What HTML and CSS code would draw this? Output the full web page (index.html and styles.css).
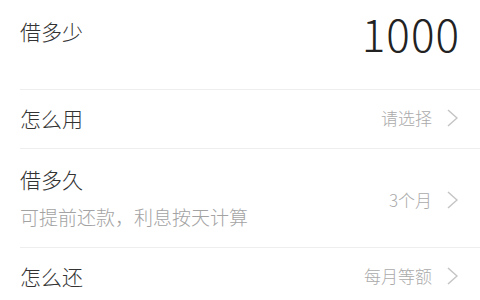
FILE: index.html
```html
<!DOCTYPE html>
<html lang="zh-CN">
<head>
  <meta charset="UTF-8" />
  <meta name="viewport" content="width=device-width, initial-scale=1.0" />
  <title>借款</title>
  <link rel="stylesheet" href="styles.css">
</head>
<body>
  <div class="list">
    <div class="item item-amount">
      <span class="title">借多少</span>
      <span class="amount">1000</span>
    </div>

    <div class="item">
      <span class="title">怎么用</span>
      <span class="value">请选择
        <svg class="arrow" width="11" height="18" viewBox="0 0 11 18"><polyline points="1,1 10,9 1,17" /></svg>
      </span>
    </div>

    <div class="item item-tall">
      <div class="left">
        <div class="title">借多久</div>
        <div class="sub">可提前还款，利息按天计算</div>
      </div>
      <span class="value">3个月
        <svg class="arrow" width="11" height="18" viewBox="0 0 11 18"><polyline points="1,1 10,9 1,17" /></svg>
      </span>
    </div>

    <div class="item">
      <span class="title">怎么还</span>
      <span class="value">每月等额
        <svg class="arrow" width="11" height="18" viewBox="0 0 11 18"><polyline points="1,1 10,9 1,17" /></svg>
      </span>
    </div>
  </div>
</body>
</html>
```

FILE: styles.css
```css
body {
  margin: 0;
  background: #fff;
  font-family: "Noto Sans CJK SC", "Noto Sans", sans-serif;
  font-weight: 300;
  color: #333;
}
.list {
  padding-left: 20px;
}
.item {
  display: flex;
  align-items: center;
  justify-content: space-between;
  height: 55px;
  padding-right: 22px;
  padding-bottom: 3px;
  border-bottom: 1px solid #eeeeee;
}
.item-amount {
  height: 66px;
  padding-bottom: 23px;
  padding-right: 20px;
}
.item-amount .title {
  margin-top: -4px;
}
.item-tall {
  height: auto;
  padding-top: 17px;
  padding-bottom: 18px;
}
.item-tall .value {
  margin-top: 4px;
}
.title {
  font-size: 21px;
  line-height: 26px;
  color: #333;
}
.sub {
  margin-top: 13px;
  font-size: 19px;
  line-height: 24px;
  color: #a3a3a3;
}
.amount {
  font-size: 44px;
  font-weight: 200;
  line-height: 50px;
  color: #222;
  letter-spacing: 1px;
}
.value {
  display: flex;
  align-items: center;
  font-size: 17px;
  color: #aaa;
}
.arrow {
  margin-left: 15px;
  fill: none;
  stroke: #c4c4c4;
  stroke-width: 1.5;
}
```
